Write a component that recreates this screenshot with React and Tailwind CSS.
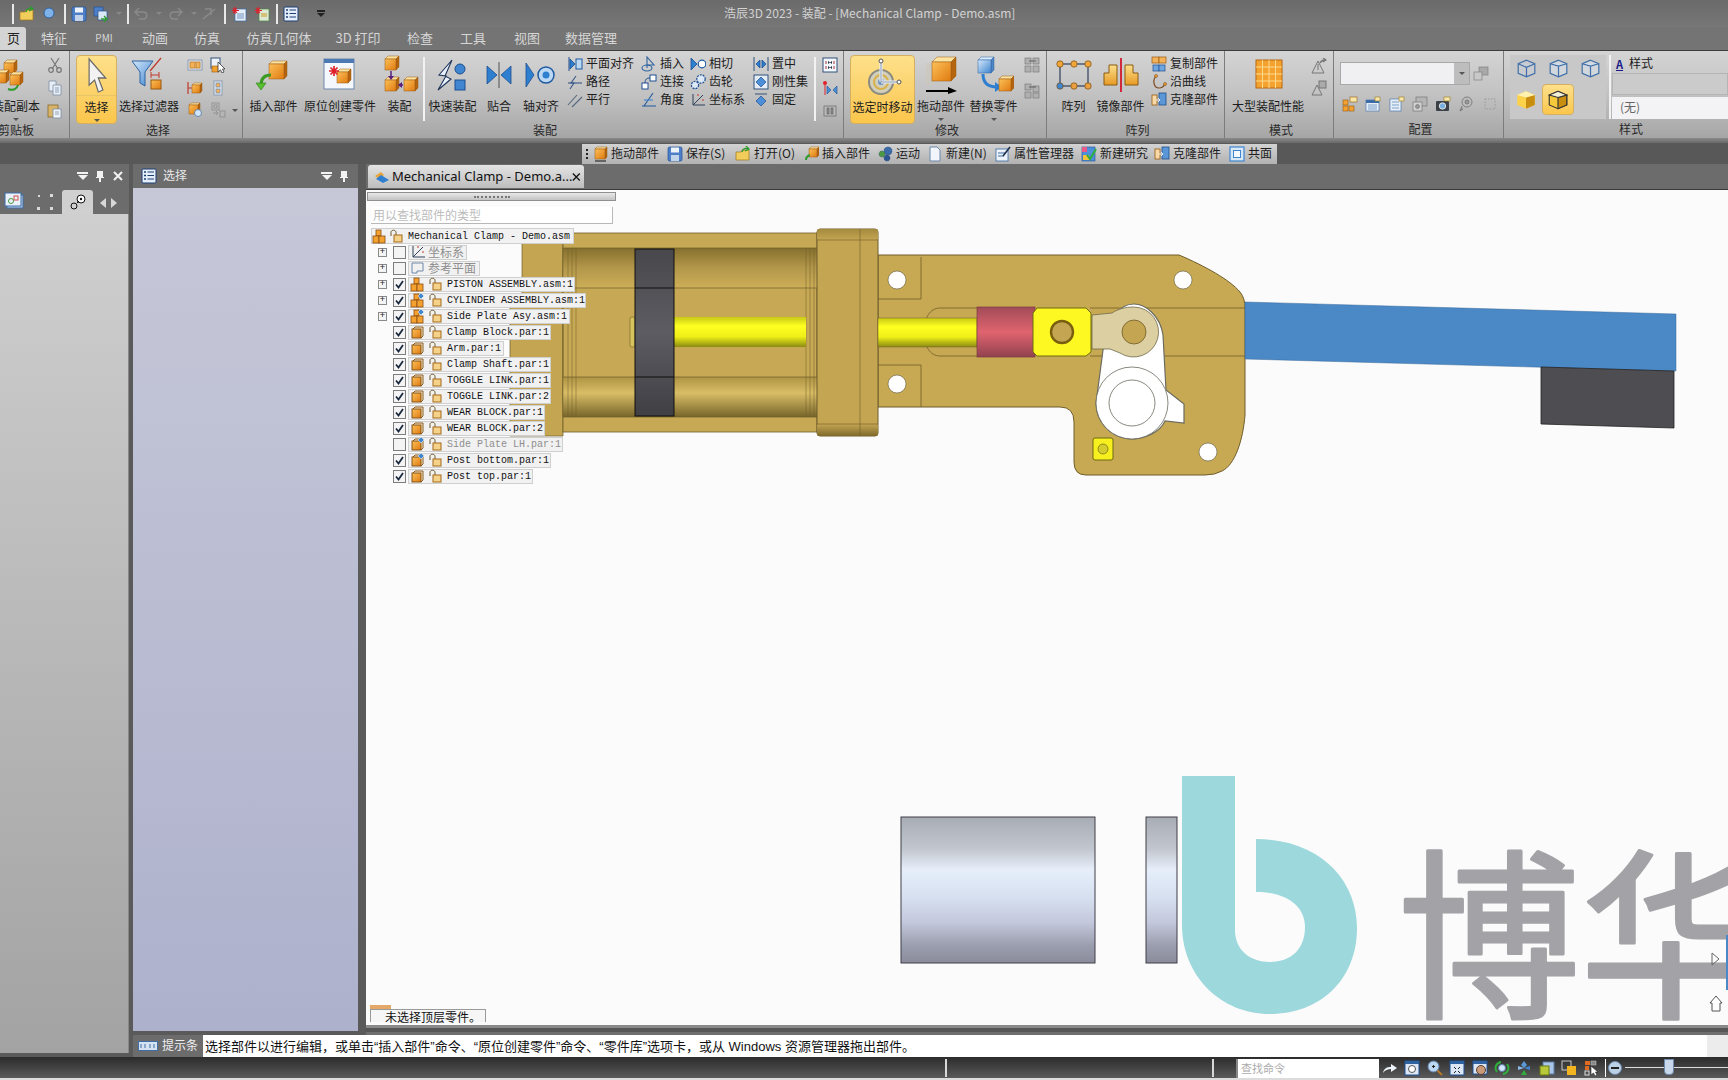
import React from 'react';

const Box = ({ x, y, s = 10, d = 3, fill = 'url(#org)', top = '#fde3a0', side = '#b5650f', line = '#9a5a10' }) => (
  <g>
    <polygon points={`${x},${y} ${x + d},${y - d} ${x + s + d},${y - d} ${x + s},${y}`} fill={top} stroke={line} strokeWidth=".5" />
    <polygon points={`${x + s},${y} ${x + s + d},${y - d} ${x + s + d},${y + s - d} ${x + s},${y + s}`} fill={side} stroke={line} strokeWidth=".5" />
    <rect x={x} y={y} width={s} height={s} fill={fill} stroke={line} strokeWidth=".5" />
  </g>
);

const BlueBox = (p) => <Box {...p} fill="url(#blu)" top="#d8ecff" side="#4f86c6" line="#2f62a0" />;

const Tri = ({ d, fill = '#2f7fd0', stroke = '#1c4f90' }) => <path d={d} fill={fill} stroke={stroke} strokeWidth=".8" />;

// big ribbon icons, drawn on a 40 box
const big = {
  copyAsm: (
    <>
      <Box x={8} y={8} s={10} />
      <Box x={0} y={18} s={10} />
      <Box x={14} y={20} s={10} />
      <path d="M12 34c5 2 9 0 10-4" fill="none" stroke="#2e9b2e" strokeWidth="2" />
    </>
  ),
  cursor: (
    <path d="M11 4 L11 30 L17 25 L21 37 L26 35 L21 23 L29 23 Z" fill="#f2f2f2" stroke="#6a6a6a" strokeWidth="1.3" transform="translate(2 -1) scale(.92 1)" />
  ),
  filter: (
    <>
      <path d="M3 6 H24 L16 17 V31 L11 28 V17 Z" fill="url(#blu)" stroke="#2f62a0" />
      <path d="M21 16 L32 3" stroke="#c0392b" strokeWidth="1.2" />
      <path d="M22 20 H30 M22 17 V23 M30 17 V23" stroke="#c0392b" fill="none" />
      <rect x="22" y="25" width="10" height="9" fill="url(#org)" stroke="#9a5a10" />
    </>
  ),
  insert: (
    <>
      <Box x={15} y={9} s={15} />
      <path d="M17 20C10 20 7 24 7 30" fill="none" stroke="#3b9b22" strokeWidth="3" />
      <polygon points="2,28 12,28 7,35" fill="#58c030" stroke="#2c7a18" strokeWidth=".6" />
    </>
  ),
  inplace: (
    <>
      <rect x="4" y="4" width="30" height="30" fill="#f4f7fc" stroke="#6d88aa" />
      <rect x="4" y="4" width="30" height="4" fill="#4c78b4" />
      <Box x={17} y={17} s={11} />
      <path d="M14 11v10M9 16h10M10.500 12.500l7 7M17.500 12.500l-7 7" stroke="#e0202a" strokeWidth="1.700" />
    </>
  ),
  assemble: (
    <>
      <Box x={5} y={4} s={11} />
      <Box x={5} y={25} s={11} />
      <Box x={24} y={25} s={11} />
      <path d="M11 16V23M19 30H23" stroke="#5a1f7a" strokeWidth="1.500" />
      <polygon points="8,21 14,21 11,25" fill="#5a1f7a" />
      <polygon points="22,27 22,33 18,30" fill="#5a1f7a" />
    </>
  ),
  quick: (
    <>
      <path d="M19 5 L6 20 L13 21 L5 35 L18 24 L12 21 Z" fill="#e9f1fb" stroke="#20355a" strokeWidth="1.100" />
      <circle cx="27" cy="14" r="5" fill="#3f85cf" stroke="#1f4f90" />
      <rect x="22" y="25" width="10" height="10" fill="#3f85cf" stroke="#1f4f90" />
    </>
  ),
  mate: (
    <>
      <Tri d="M8 11 L18 20 L8 29 Z" />
      <Tri d="M32 11 L22 20 L32 29 Z" />
      <path d="M20 7V33" stroke="#333" strokeWidth=".8" />
    </>
  ),
  axis: (
    <>
      <Tri d="M5 8 L13 20 L5 32 Z" />
      <circle cx="25" cy="20" r="8" fill="#bcd8f2" stroke="#1f5aa0" strokeWidth="1.500" />
      <circle cx="25" cy="20" r="3.500" fill="#2f7fd0" />
    </>
  ),
  gizmo: (
    <>
      <circle cx="18" cy="26" r="12" fill="#d2cfbd" stroke="#8b8b80" strokeWidth="2" />
      <circle cx="18" cy="26" r="7" fill="none" stroke="#d8b14a" strokeWidth="2" />
      <circle cx="18" cy="26" r="3" fill="#6f93bf" />
      <path d="M18 26V6M18 26H35" stroke="#e8f0fa" strokeWidth="3" />
      <path d="M18 26V6M18 26H35" stroke="#6d7a8c" strokeWidth=".7" />
      <circle cx="18" cy="5" r="2" fill="#fff" stroke="#555" />
      <circle cx="36" cy="26" r="2" fill="#fff" stroke="#555" />
    </>
  ),
  drag: (
    <>
      <rect x="5" y="8" width="8" height="22" fill="#cbc6ba" opacity=".6" />
      <Box x={11} y={7} s={19} d={5} />
      <path d="M5 36H28" stroke="#000" strokeWidth="2" />
      <polygon points="27,32 36,36 27,39" fill="#000" />
    </>
  ),
  replace: (
    <>
      <BlueBox x={4} y={5} s={13} d={3} />
      <path d="M9 19c0 10 6 13 14 13" fill="none" stroke="#2f7fd0" strokeWidth="3" />
      <polygon points="21,27 28,32 21,37" fill="#2f7fd0" />
      <Box x={25} y={24} s={12} d={3} />
    </>
  ),
  pattern: (
    <>
      <rect x="6" y="9" width="28" height="22" fill="none" stroke="#30405a" strokeWidth="1.200" />
      {[[6, 9], [20, 9], [34, 9], [6, 31], [20, 31], [34, 31]].map(([x, y], i) => (
        <circle key={i} cx={x} cy={y} r="3.200" fill={y === 9 ? '#f0a63a' : i === 3 ? '#3f85cf' : '#e8a040'} stroke="#7a4a10" strokeWidth=".7" />
      ))}
    </>
  ),
  mirror: (
    <>
      <path d="M3 30V18H8V10H16V30Z" fill="url(#ylw)" stroke="#8a5a10" />
      <path d="M37 30V18H32V10H24V30Z" fill="url(#ylw)" stroke="#8a5a10" />
      <path d="M20 3V37" stroke="#d02a3a" strokeWidth="2" />
    </>
  ),
  grid: (
    <>
      <rect x="8" y="5" width="26" height="28" fill="#f3a230" stroke="#b8670f" />
      <path d="M14.500 5V33M21 5V33M27.500 5V33M8 12H34M8 19H34M8 26H34" stroke="#ffd98a" />
    </>
  ),
};

// small icons, drawn on a 16 box
const small = {
  scissors: (
    <g fill="none" stroke="#777" strokeWidth="1.200">
      <path d="M4 1L11 12M12 1L5 12" />
      <circle cx="4" cy="13" r="2.300" />
      <circle cx="12" cy="13" r="2.300" />
    </g>
  ),
  copy: (
    <g stroke="#7c8ea6" fill="#e8eef6" strokeWidth=".8">
      <path d="M2 1h7v10H2z" />
      <path d="M6 5h8v10H6z" />
      <path d="M8 8h4M8 10h4M8 12h4" />
    </g>
  ),
  paste: (
    <g strokeWidth=".8">
      <rect x="1" y="2" width="10" height="12" fill="#d8b46a" stroke="#8a6a2a" />
      <path d="M6 6h8v9H6z" fill="#eef3f9" stroke="#7c8ea6" />
      <path d="M8 9h4M8 11h4" stroke="#7c8ea6" />
    </g>
  ),
  twoBox: (
    <g stroke="#c17a20" strokeWidth=".8">
      <rect x="1" y="3" width="14" height="10" fill="#dde6f2" stroke="#7b8ea8" />
      <rect x="3" y="5" width="5" height="6" fill="#f3b25a" />
      <rect x="9" y="5" width="4" height="6" fill="#f3b25a" />
    </g>
  ),
  boxCursor: (
    <g>
      <rect x="1" y="1" width="9" height="10" fill="#eef3f9" stroke="#30507a" />
      <rect x="2" y="9" width="7" height="6" fill="#f3a230" stroke="#9a5a10" strokeWidth=".6" />
      <path d="M8 5L8 15L10.500 12.800L12 16L14 15L12.500 12H15Z" fill="#fff" stroke="#333" strokeWidth=".8" />
    </g>
  ),
  hBox: (
    <g>
      <path d="M1 2V14M1 8H5" stroke="#c0392b" strokeWidth="1.200" />
      <Box x={5} y={5} s={8} d={2} />
    </g>
  ),
  stack: (
    <g stroke="#7b8ea8" strokeWidth=".8">
      <rect x="4" y="1" width="8" height="14" fill="#e4ecf6" />
      <rect x="6" y="3" width="4" height="4" fill="#f3b25a" />
      <rect x="6" y="9" width="4" height="4" fill="#f3b25a" />
    </g>
  ),
  search: (
    <g>
      <Box x={2} y={3} s={9} d={2} />
      <circle cx="11" cy="11" r="3.500" fill="#cfe6fb" stroke="#6d88aa" />
    </g>
  ),
  ghost: (
    <g fill="none" stroke="#8c8c8c" strokeWidth=".8">
      <rect x="2" y="1" width="7" height="7" />
      <rect x="4" y="3" width="3" height="3" />
      <rect x="10" y="9" width="5" height="6" />
      <path d="M3 11h5M6 9l2 2-2 2" />
    </g>
  ),
  plane: (
    <g>
      <path d="M2 1V15" stroke="#1c4f90" />
      <Tri d="M3 3L8 8L3 13Z" />
      <rect x="9" y="3" width="6" height="10" fill="#bcd8f2" stroke="#1f5aa0" />
    </g>
  ),
  path: (
    <g fill="none" stroke="#3a5a88" strokeWidth="1.100">
      <path d="M1 9H15" />
      <path d="M9 2L4 9L7 9L3 15" />
    </g>
  ),
  parallel: <path d="M1 13L10 3M5 15L15 5" stroke="#55677f" strokeWidth="1.100" fill="none" />,
  insertPin: (
    <g fill="none" stroke="#2f62a0" strokeWidth="1.100">
      <ellipse cx="6" cy="12" rx="5" ry="3" />
      <path d="M6 12V1L13 9H6" />
    </g>
  ),
  connect: (
    <g>
      <rect x="1" y="9" width="6" height="6" fill="#fff" stroke="#1f4f90" />
      <rect x="9" y="1" width="6" height="6" fill="#fff" stroke="#1f4f90" />
      <path d="M4 9C4 5 6 4 9 4" fill="none" stroke="#1f4f90" />
    </g>
  ),
  angle: (
    <g fill="none" stroke="#1f5aa0" strokeWidth="1.100">
      <path d="M1 14H15M3 14L12 1" />
      <path d="M3 8H12" stroke="#3f85cf" />
    </g>
  ),
  tangent: (
    <g>
      <Tri d="M1 2L7 8L1 14Z" />
      <circle cx="12" cy="8" r="3.800" fill="#fff" stroke="#1f5aa0" strokeWidth="1.200" />
    </g>
  ),
  gear: (
    <g fill="#dce8f6" stroke="#1f4f90" strokeWidth="1.200" strokeDasharray="2 1">
      <circle cx="5" cy="11" r="3.600" />
      <circle cx="11" cy="5" r="4.200" />
    </g>
  ),
  coord: (
    <g fill="none" stroke="#30405a" strokeWidth="1">
      <path d="M3 13L13 3M3 13H15M3 13V2" />
      <path d="M7 3h2M13 7v2" stroke="#c0392b" />
    </g>
  ),
  center: (
    <g>
      <path d="M1 1V15M15 1V15" stroke="#30507a" />
      <Tri d="M7 4L3 8L7 12Z" />
      <Tri d="M9 4L13 8L9 12Z" />
    </g>
  ),
  rigid: (
    <g>
      <rect x="1" y="1" width="14" height="14" fill="#e4ecf6" stroke="#30507a" />
      <path d="M8 3L13 8L8 13L3 8Z" fill="#4c8ed8" stroke="#1f4f90" strokeWidth=".7" />
    </g>
  ),
  fixed: (
    <g>
      <path d="M2 2H14" stroke="#30507a" />
      <path d="M8 4L13 9L8 14L3 9Z" fill="#4c8ed8" stroke="#1f4f90" strokeWidth=".7" />
    </g>
  ),
  frameTri: (
    <g>
      <rect x="1" y="1" width="14" height="14" fill="#f4f7fc" stroke="#30507a" />
      <path d="M4 4V7M12 4V7M4 9V12M12 9V12" stroke="#a33" />
      <path d="M6 4L8 5.500L6 7ZM10 4L8 5.500L10 7ZM6 9L8 10.500L6 12ZM10 9L8 10.500L10 12Z" fill="#234" />
    </g>
  ),
  bowTie: (
    <g>
      <circle cx="3" cy="3" r="2" fill="#e0202a" />
      <path d="M3 5V15" stroke="#e0202a" />
      <path d="M5 6L9 10L5 14ZM15 6L11 10L15 14Z" fill="#4c8ed8" stroke="#1f4f90" strokeWidth=".6" />
    </g>
  ),
  dimBox: (
    <g fill="#8d8d8d" stroke="#666" strokeWidth=".7">
      <rect x="2" y="3" width="12" height="10" fill="#bbb" />
      <rect x="5" y="5" width="2" height="6" />
      <rect x="9" y="5" width="2" height="6" />
    </g>
  ),
  dimA: (
    <g fill="#b0b0b0" stroke="#7c7c7c" strokeWidth=".7">
      <rect x="1" y="1" width="6" height="6" />
      <rect x="9" y="1" width="6" height="6" />
      <rect x="1" y="9" width="6" height="6" />
      <rect x="9" y="9" width="6" height="6" />
      <path d="M5 4H12" stroke="#444" />
    </g>
  ),
  dimB: (
    <g fill="#b0b0b0" stroke="#7c7c7c" strokeWidth=".7">
      <rect x="1" y="1" width="6" height="6" />
      <rect x="9" y="3" width="6" height="6" />
      <rect x="1" y="9" width="6" height="6" />
      <rect x="9" y="10" width="6" height="5" />
      <path d="M12 4H5" stroke="#444" />
    </g>
  ),
  copyParts: (
    <g strokeWidth=".7">
      <rect x="1" y="1" width="7" height="6" fill="#f3b25a" stroke="#9a5a10" />
      <rect x="8" y="1" width="7" height="6" fill="#f3b25a" stroke="#9a5a10" />
      <rect x="2" y="9" width="6" height="6" fill="#6fa6df" stroke="#1f4f90" />
      <rect x="8" y="9" width="6" height="6" fill="#6fa6df" stroke="#1f4f90" />
    </g>
  ),
  curve: (
    <g fill="none">
      <path d="M5 2C1 7 3 14 8 14C11 14 13 12 14 10" stroke="#7a4a20" strokeWidth="1.200" />
      <circle cx="5" cy="2" r="1.500" fill="#f3a230" stroke="#7a4a20" strokeWidth=".6" />
      <circle cx="14" cy="10" r="1.500" fill="#f3a230" stroke="#7a4a20" strokeWidth=".6" />
    </g>
  ),
  clone: (
    <g strokeWidth=".8">
      <rect x="1" y="3" width="5" height="10" fill="#f7d9a8" stroke="#9a5a10" />
      <rect x="8" y="1" width="7" height="12" fill="#5b97d6" stroke="#1f4f90" />
      <path d="M5 8h4M7 6l2 2-2 2" stroke="#fff" fill="none" />
    </g>
  ),
  tent1: (
    <g fill="none" stroke="#777" strokeWidth="1">
      <path d="M1 15L7 3L13 15ZM7 6V12" />
      <path d="M9 5C10 3 12 2 14 2M12 0L15 2L12 4" strokeWidth="1.300" />
    </g>
  ),
  tent2: (
    <g fill="none" stroke="#777" strokeWidth="1">
      <path d="M1 15L6 5L11 15Z" />
      <rect x="8" y="1" width="7" height="7" fill="#aaa" />
    </g>
  ),
  cfgSave: (
    <g fill="#a9a9a9" stroke="#808080" strokeWidth=".7">
      <rect x="6" y="1" width="9" height="8" />
      <rect x="1" y="6" width="8" height="8" fill="#c8c8c8" />
    </g>
  ),
  cfg1: (
    <g strokeWidth=".6" stroke="#9a5a10" fill="#f3a230">
      <rect x="1" y="4" width="5" height="5" />
      <rect x="1" y="10" width="5" height="5" />
      <rect x="7" y="10" width="5" height="5" />
      <rect x="8" y="1" width="7" height="5" fill="#f7e7a8" />
    </g>
  ),
  cfg2: (
    <g strokeWidth=".6">
      <rect x="1" y="4" width="13" height="11" fill="#e6eef8" stroke="#3b6ca8" />
      <rect x="1" y="4" width="13" height="3" fill="#3b6ca8" />
      <path d="M3 9h9M3 11h9M3 13h9" stroke="#3b6ca8" />
      <rect x="10" y="1" width="5" height="4" fill="#f7e7a8" stroke="#9a7a20" />
    </g>
  ),
  cfg3: (
    <g strokeWidth=".6">
      <rect x="1" y="3" width="11" height="12" fill="#e6eef8" stroke="#3b6ca8" />
      <path d="M3 6h7M3 9h7M3 12h7" stroke="#3b6ca8" />
      <rect x="10" y="1" width="5" height="4" fill="#f7e7a8" stroke="#9a7a20" />
    </g>
  ),
  cfg4: (
    <g fill="#b5b5b5" stroke="#777" strokeWidth=".7">
      <rect x="4" y="1" width="11" height="9" />
      <rect x="1" y="6" width="9" height="9" fill="#d0d0d0" />
      <circle cx="5.500" cy="10.500" r="2" fill="#999" />
    </g>
  ),
  camera: (
    <g>
      <rect x="1" y="5" width="13" height="10" rx="1" fill="#3a3f48" />
      <circle cx="7.500" cy="10" r="3.200" fill="#7ab0e0" stroke="#ddd" />
      <rect x="9" y="1" width="6" height="4" fill="#f7e7a8" stroke="#9a7a20" strokeWidth=".6" />
    </g>
  ),
  camGhost: (
    <g fill="#9a9a9a" stroke="#707070" strokeWidth=".8">
      <circle cx="9" cy="6" r="5" fill="#bdbdbd" />
      <circle cx="9" cy="6" r="2" />
      <path d="M4 10L2 15L5 13" />
    </g>
  ),
  dotted: <rect x="3" y="3" width="10" height="10" fill="none" stroke="#9a9a9a" strokeDasharray="1.500 1.500" />,
  wire: (
    <g fill="#c6d4e6" fillOpacity=".25" stroke="#3f6ea8">
      <path d="M8 1L15 4V12L8 15L1 12V4Z" />
      <path d="M1 4L8 7L15 4M8 7V15" />
    </g>
  ),
  wire2: (
    <g fill="#dbe6f2" fillOpacity=".5" stroke="#3f6ea8">
      <path d="M8 1L15 4V12L8 15L1 12V4Z" />
      <path d="M1 4L8 6L15 4M8 6V15" />
    </g>
  ),
  solid: (
    <g>
      <path d="M8 1L15 4V12L8 15L1 12V4Z" fill="#fbd24a" />
      <path d="M8 6L15 4V12L8 15Z" fill="#c98d10" />
      <path d="M1 4L8 1L15 4L8 6Z" fill="#fff2b0" />
    </g>
  ),
  solidEdge: (
    <g stroke="#333" strokeWidth=".9">
      <path d="M8 1L15 4V12L8 15L1 12V4Z" fill="#f6c93a" />
      <path d="M8 6L15 4V12L8 15Z" fill="#c98d10" />
      <path d="M1 4L8 1L15 4L8 6Z" fill="#f4f0d8" />
    </g>
  ),
  folder: (
    <g>
      <path d="M1 6H6L7 4H14V14H1Z" fill="#f3cd5b" stroke="#a17a1a" strokeWidth=".7" />
      <path d="M7 6C8 2 11 2 13 3M11 0L14 3L10 5" fill="none" stroke="#2e9b2e" strokeWidth="1.300" />
    </g>
  ),
  globe: (
    <g>
      <circle cx="7" cy="7" r="5" fill="#7fb2e8" stroke="#2f62a0" />
      <path d="M11 11L14 14" stroke="#777" strokeWidth="1.500" />
    </g>
  ),
  save: (
    <g>
      <rect x="1" y="1" width="14" height="14" rx="1.500" fill="#4d7fc8" stroke="#24508f" strokeWidth=".7" />
      <rect x="4" y="1.500" width="8" height="5" fill="#eef3fa" />
      <rect x="4" y="9" width="8" height="6" fill="#c3d4ea" />
    </g>
  ),
  saveAll: (
    <g>
      <rect x="1" y="1" width="9" height="9" fill="#4d7fc8" stroke="#24508f" strokeWidth=".7" />
      <rect x="5" y="5" width="9" height="9" fill="#dce7f5" stroke="#24508f" strokeWidth=".7" />
      <path d="M8 13h6M11 10l3 3-3 3" stroke="#2e9b2e" strokeWidth="1.300" fill="none" />
    </g>
  ),
  undo: <path d="M3 6H10C15 6 15 13 10 13H6M6 2L2 6L6 10" fill="none" stroke="#8b8b8b" strokeWidth="1.400" />,
  redo: <path d="M13 6H6C1 6 1 13 6 13H10M10 2L14 6L10 10" fill="none" stroke="#8b8b8b" strokeWidth="1.400" />,
  link: <path d="M2 13L14 3M4 3H10V9" fill="none" stroke="#8b8b8b" strokeWidth="1.400" />,
  starPage: (
    <g>
      <rect x="4" y="3" width="11" height="12" fill="#e6eef8" stroke="#3b6ca8" strokeWidth=".7" />
      <path d="M6 8h7M6 10h7M6 12h7" stroke="#3b6ca8" strokeWidth=".7" />
      <path d="M4 1v7M1 4.500h7M2 2l4 5M6 2l-4 5" stroke="#e0202a" strokeWidth="1.100" />
    </g>
  ),
  starPage2: (
    <g>
      <rect x="5" y="3" width="10" height="12" fill="#dbe9d5" stroke="#4b8a42" strokeWidth=".7" />
      <path d="M7 8h6M7 10h6" stroke="#d09a20" strokeWidth="1.200" />
      <path d="M4 1v7M1 4.500h7M2 2l4 5M6 2l-4 5" stroke="#e0202a" strokeWidth="1.100" />
    </g>
  ),
  listDoc: (
    <g>
      <rect x="1" y="1" width="14" height="14" rx="1" fill="#e4eefa" stroke="#1f3f72" />
      <path d="M3 4h2M3 7.500h2M3 11h2" stroke="#1f3f72" strokeWidth="1.500" />
      <path d="M6.500 4H13M6.500 7.500H13M6.500 11H13" stroke="#1f3f72" />
    </g>
  ),
  dragCube: (
    <g>
      <Box x={3} y={3} s={10} d={2} />
      <path d="M3 15H14" stroke="#111" />
    </g>
  ),
  greenCube: (
    <g>
      <Box x={6} y={3} s={8} d={2} />
      <path d="M7 9C4 10 3 12 3 14" stroke="#2e9b2e" strokeWidth="2" fill="none" />
    </g>
  ),
  gears: (
    <g fill="#3b6ca8" stroke="#1f3f72" strokeWidth=".5" strokeDasharray="1.500 .7">
      <circle cx="11" cy="5" r="4" />
      <circle cx="5" cy="8" r="3" fill="#4b9a42" />
      <circle cx="10" cy="12" r="3" fill="#2b5590" />
    </g>
  ),
  newDoc: <path d="M3 1H10L13 4V15H3Z" fill="#f2f6fb" stroke="#6d88aa" />,
  props: (
    <g>
      <rect x="1" y="3" width="12" height="12" fill="#eef3f9" stroke="#3b6ca8" strokeWidth=".8" />
      <path d="M3 7h8M3 10h6" stroke="#3b6ca8" />
      <path d="M8 10L15 1" stroke="#1d2f4a" strokeWidth="1.600" />
    </g>
  ),
  study: (
    <g>
      <rect x="1" y="1" width="13" height="14" fill="#4d8fd8" stroke="#24508f" strokeWidth=".6" />
      <rect x="1" y="1" width="5" height="5" fill="#e85a8a" />
      <rect x="2" y="9" width="6" height="5" fill="#f3c13a" />
      <path d="M6 9L9 13L15 3" stroke="#2eae3a" strokeWidth="2" fill="none" />
    </g>
  ),
  coplanar: (
    <g>
      <rect x="1" y="1" width="14" height="14" fill="#d9e8f7" stroke="#3f85cf" strokeWidth="1.200" />
      <rect x="4.500" y="4.500" width="7" height="7" fill="#f4f8fc" stroke="#3f85cf" />
    </g>
  ),
  fitView: (
    <g>
      <rect x="1" y="1" width="14" height="14" fill="#dce7f5" stroke="#1f4f90" />
      <rect x="1" y="1" width="14" height="3" fill="#2f62a0" />
      <circle cx="8" cy="9" r="3.500" fill="#fff" stroke="#555" />
    </g>
  ),
  zoomIn: (
    <g>
      <circle cx="6.500" cy="6.500" r="5.500" fill="#bcd8f2" stroke="#5d7fa8" />
      <path d="M5 6.500h3M6.500 5v3" stroke="#222" />
      <path d="M10.500 10.500L15 15" stroke="#b5772a" strokeWidth="2" />
    </g>
  ),
  zoomArea: (
    <g>
      <rect x="1" y="1" width="14" height="14" fill="#dce7f5" stroke="#1f4f90" />
      <rect x="1" y="1" width="14" height="3" fill="#2f62a0" />
      <path d="M5 7l2 2M11 7L9 9M5 13l2-2M11 13L9 11" stroke="#222" />
    </g>
  ),
  pan: (
    <g>
      <rect x="1" y="1" width="14" height="13" fill="#dce7f5" stroke="#1f4f90" />
      <rect x="1" y="1" width="14" height="3" fill="#2f62a0" />
      <circle cx="9" cy="10" r="4.500" fill="#c99a7a" stroke="#5a4030" />
    </g>
  ),
  orbit: (
    <g>
      <circle cx="8" cy="8" r="3.500" fill="#cfe6fb" stroke="#5d7fa8" />
      <path d="M3 12C0 8 2 3 7 2M13 4C16 8 14 13 9 14" fill="none" stroke="#2eae3a" strokeWidth="2" />
    </g>
  ),
  nav: (
    <g>
      <path d="M8 1L11 5L8 8L5 5Z" fill="#5b97d6" />
      <path d="M8 8L14 6V10Z" fill="#3f85cf" />
      <path d="M8 8L2 6V10Z" fill="#8ab8e8" />
      <path d="M8 10L11 15H5Z" fill="#2eae3a" />
    </g>
  ),
  screen: (
    <g>
      <rect x="4" y="2" width="11" height="12" fill="#a9c6e8" stroke="#5d7fa8" />
      <rect x="1" y="6" width="9" height="9" fill="#b8c93a" stroke="#6a7a10" />
    </g>
  ),
  layers: (
    <g>
      <rect x="1" y="1" width="9" height="9" fill="none" stroke="#c8c8c8" />
      <rect x="6" y="6" width="9" height="9" fill="#f2b41e" />
    </g>
  ),
  selCursor: (
    <g>
      <rect x="1" y="1" width="5" height="4" fill="#e06a20" />
      <rect x="7" y="1" width="5" height="4" fill="#888" stroke="#ccc" strokeWidth=".5" />
      <rect x="1" y="6" width="4" height="4" fill="#e06a20" />
      <rect x="1" y="11" width="4" height="4" fill="none" stroke="#ddd" />
      <path d="M7 6L7 15L9.500 13L11 16L13 15L11.500 12H14Z" fill="#fff" stroke="#222" strokeWidth=".6" />
    </g>
  ),
  arrowRight: <path d="M1 13C2 8 5 7 9 7V4L15 8L9 12V9C6 9 3 10 1 13Z" fill="#eef3f9" />,
};

const S = ({ n, s = 16, className }) => (
  <svg width={s} height={s} viewBox="0 0 16 16" className={`shrink-0 ${className || ''}`}>
    {small[n]}
  </svg>
);

const Caret = ({ className = '', style }) => (
  <div style={style} className={`w-0 h-0 border-x-[3px] border-x-transparent border-t-[3px] border-t-[#555] ${className}`} />
);

const BigBtn = ({ icon, label, w, active, caret }) => (
  <div className={`flex flex-col items-center h-[69px] shrink-0 ${active ? 'rounded-sm border border-[#d5b060] bg-gradient-to-b from-[#fde08a] to-[#fbc64a]' : ''}`} style={{ width: w }}>
    <div className={`h-[40px] w-full flex items-center justify-center shrink-0 ${active && caret ? 'border-b border-b-[#e8c468]' : ''}`}>
      <svg width="40" height="40" viewBox="0 0 40 40" className="shrink-0">{big[icon]}</svg>
    </div>
    <div className="text-[12px] leading-[18px] whitespace-nowrap text-[#1c1c1c] mt-[2px]">{label}</div>
    {caret && <Caret className="mt-[3px]" />}
  </div>
);

const SmallRow = ({ n, label }) => (
  <div className="h-[18px] flex items-center gap-[3px] whitespace-nowrap text-[12px] text-[#1c1c1c]">
    <S n={n} />
    <span className="pb-[2px]">{label}</span>
  </div>
);

const SmallCol = ({ w, rows, className = '' }) => (
  <div className={`flex flex-col shrink-0 ${className}`} style={{ width: w }}>
    {rows.map(([n, label]) => (
      <SmallRow key={label} n={n} label={label} />
    ))}
  </div>
);

const Group = ({ w, label, labelOffset = 0, labelClass = 'text-center', children, className = '' }) => (
  <div className="flex flex-col h-full shrink-0 border-r border-r-[#7c7c7c] overflow-hidden" style={{ width: w }}>
    <div className={`flex pt-[4px] h-[72px] ${className}`}>{children}</div>
    <div className={`h-[16px] text-[12px] leading-[14px] text-[#2a2a2a] whitespace-nowrap ${labelClass}`} style={{ paddingLeft: labelOffset }}>
      {label}
    </div>
  </div>
);

const Vsep = ({ className = '' }) => <div className={`w-[2px] h-[64px] bg-[#f2f2f2] shrink-0 ${className}`} />;

const IconCol = ({ names, w = 24, gap = 6, className = '' }) => (
  <div className={`flex flex-col items-center shrink-0 pt-[2px] ${className}`} style={{ width: w, gap }}>
    {names.map((n) => (
      <S key={n} n={n} />
    ))}
  </div>
);

const Ribbon = () => (
  <div className="h-[88px] flex bg-gradient-to-b from-[#d4d4d4] via-[#c2c2c2] to-[#a6a6a6] border-t border-[#3c3c3c]">
    <Group w={70} label="剪贴板" labelClass="-ml-[2px]">
      <div className="w-[48px] -ml-[8px] shrink-0">
        <BigBtn icon="copyAsm" label="装配副本" w={48} caret />
      </div>
      <IconCol names={['scissors', 'copy', 'paste']} w={24} gap={7} className="pl-[4px] ml-[1px]" />
    </Group>
    <Group w={173} label="选择" labelOffset={4} className="pl-[6px]">
      <BigBtn icon="cursor" label="选择" w={41} active caret />
      <BigBtn icon="filter" label="选择过滤器" w={64} />
      <div className="grid grid-cols-[23px_23px] gap-y-[6px] pt-[2px] ml-[2px] justify-items-center h-[64px]">
        {['twoBox', 'boxCursor', 'hBox', 'stack', 'search', 'ghost'].map((n) => (
          <S key={n} n={n} />
        ))}
      </div>
      <Caret className="mt-[54px] ml-[3px]" />
    </Group>
    <Group w={601} label="装配" labelOffset={4}>
      <BigBtn icon="insert" label="插入部件" w={61} />
      <BigBtn icon="inplace" label="原位创建零件" w={72} caret />
      <BigBtn icon="assemble" label="装配" w={47} />
      <Vsep className="mt-[2px]" />
      <BigBtn icon="quick" label="快速装配" w={55} />
      <BigBtn icon="mate" label="贴合" w={38} />
      <BigBtn icon="axis" label="轴对齐" w={46} />
      <SmallCol w={74} className="ml-[3px]" rows={[['plane', '平面对齐'], ['path', '路径'], ['parallel', '平行']]} />
      <SmallCol w={49} rows={[['insertPin', '插入'], ['connect', '连接'], ['angle', '角度']]} />
      <SmallCol w={63} rows={[['tangent', '相切'], ['gear', '齿轮'], ['coord', '坐标系']]} />
      <SmallCol w={61} rows={[['center', '置中'], ['rigid', '刚性集'], ['fixed', '固定']]} />
      <Vsep className="mt-[2px]" />
      <IconCol names={['frameTri', 'bowTie', 'dimBox']} w={28} gap={7} />
    </Group>
    <Group w={203} label="修改" labelOffset={4} className="pl-[6px]">
      <BigBtn icon="gizmo" label="选定时移动" w={65} active />
      <BigBtn icon="drag" label="拖动部件" w={52} caret />
      <BigBtn icon="replace" label="替换零件" w={53} caret />
      <IconCol names={['dimA', 'dimB']} w={24} gap={10} />
    </Group>
    <Group w={178} label="阵列" labelOffset={4} className="pl-[5px]">
      <BigBtn icon="pattern" label="阵列" w={43} />
      <BigBtn icon="mirror" label="镜像部件" w={51} />
      <SmallCol w={70} className="ml-[5px]" rows={[['copyParts', '复制部件'], ['curve', '沿曲线'], ['clone', '克隆部件']]} />
    </Group>
    <Group w={109} label="模式" labelOffset={4} className="pl-[7px]">
      <BigBtn icon="grid" label="大型装配性能" w={72} />
      <IconCol names={['tent1', 'tent2']} w={26} gap={6} className="ml-[2px] pt-[3px]" />
    </Group>
    <Group w={170} label="配置" labelOffset={4} className="pl-[6px]">
      <div className="flex flex-col">
        <div className="flex items-center mt-[7px] gap-[2px]">
          <div className="w-[130px] h-[23px] flex bg-[#bdbdbd] border border-[#a8a8a8]">
            <div className="w-[113px] bg-[#f0eff2]" />
            <div className="flex-1 flex items-center justify-center"><Caret /></div>
          </div>
          <S n="cfgSave" className="ml-[1px]" />
        </div>
        <div className="flex mt-[11px] gap-[7.300px] pl-[2px]">
          {['cfg1', 'cfg2', 'cfg3', 'cfg4', 'camera', 'camGhost', 'dotted'].map((n) => (
            <S key={n} n={n} />
          ))}
        </div>
      </div>
    </Group>
    <div className="flex flex-col h-full flex-1 overflow-hidden">
      <div className="flex pt-[4px] h-[72px] pl-[6px]">
        <div className="w-[96px] h-[64px] bg-[#c8c8c8] grid grid-cols-3 justify-items-center items-center py-[1px] shrink-0">
          <S n="wire" s={19} />
          <S n="wire2" s={19} />
          <S n="wire2" s={19} />
          <S n="solid" s={20} />
          <div className="w-[32px] h-[31px] rounded-sm border border-[#d5b060] bg-gradient-to-b from-[#fde08a] to-[#fbc64a] flex items-center justify-center">
            <S n="solidEdge" s={20} />
          </div>
        </div>
        <Vsep className="ml-[3px]" />
        <div className="flex-1 pl-[1px]">
          <div className="h-[18px] flex items-center text-[12px] text-[#1c1c1c] pl-[4px] gap-[6px]">
            <span className="font-bold text-[#1a1a8a] underline text-[11px] leading-none">A</span>
            <span className="pb-[2px]">样式</span>
          </div>
          <div className="h-[22px] bg-[#cbcbcb] border border-[#b5b5b5]" />
          <div className="h-[22px] mt-[2px] bg-[#f3f3f5] pl-[8px] text-[12px] leading-[20px] text-[#666]">(无)</div>
        </div>
      </div>
      <div className="h-[16px] text-[12px] leading-[14px] text-[#2a2a2a] pl-[115px]">样式</div>
    </div>
  </div>
);

const QUICK = [
  { sep: 13 }, { n: 'folder', x: 27 }, { n: 'globe', x: 50 }, { sep: 65 }, { n: 'save', x: 79 }, { n: 'saveAll', x: 101 },
  { caret: 119 }, { sep: 128 }, { n: 'undo', x: 141 }, { caret: 159 }, { n: 'redo', x: 176 }, { caret: 194 }, { n: 'link', x: 209 },
  { sep: 225 }, { n: 'starPage', x: 239 }, { n: 'starPage2', x: 262 }, { sep: 277 }, { n: 'listDoc', x: 291 },
];

const TitleBar = () => {
  let cursor = 0;
  return (
    <div className="h-[27px] flex items-center bg-gradient-to-b from-[#6a6a6a] to-[#777777] shrink-0">
      {QUICK.map((q, i) => {
        const center = q.sep ?? q.caret ?? q.x;
        const size = q.sep ? 2 : q.caret ? 6 : 16;
        const ml = center - size / 2 - cursor;
        cursor = center + size / 2;
        if (q.sep) return <div key={i} className="w-[2px] h-[20px] bg-[#e8e8e8] shrink-0" style={{ marginLeft: ml }} />;
        if (q.caret) return <Caret key={i} className="shrink-0 !border-t-[#888]" style={{ marginLeft: ml }} />;
        return <div key={i} style={{ marginLeft: ml }} className="shrink-0"><S n={q.n} /></div>;
      })}
      <div className="ml-[18px] flex flex-col items-center gap-[1px] shrink-0">
        <div className="w-[8px] h-[2px] bg-[#222]" />
        <div className="w-0 h-0 border-x-[4px] border-x-transparent border-t-[4px] border-t-[#222]" />
      </div>
      <div className="flex-1 pl-[399px] text-[12px] text-[#d2d2d2] whitespace-nowrap pb-[2px]">
        浩辰3D 2023 - 装配 - [Mechanical Clamp - Demo.asm]
      </div>
    </div>
  );
};

const TABS = [
  ['特征', 54, 30], ['PMI', 104, 30], ['动画', 155, 30], ['仿真', 207, 30], ['仿真几何体', 279, 70], ['3D 打印', 358, 50], ['检查', 420, 30], ['工具', 473, 30], ['视图', 527, 30], ['数据管理', 591, 56],
];

const TabBar = () => {
  let cursor = 26;
  return (
    <div className="h-[23px] flex bg-[#747474] text-[13px] text-[#d6d6d6] shrink-0">
      <div className="w-[26px] bg-[#d4d4d4] rounded-tr-[3px] text-[#222] text-right pr-[6px] leading-[22px]">页</div>
      {TABS.map(([t, cx, w]) => {
        const ml = cx - w / 2 - cursor;
        cursor = cx + w / 2;
        return (
          <div key={t} className={`text-center whitespace-nowrap leading-[21px] ${t === 'PMI' ? 'text-[10px]' : ''}`} style={{ width: w, marginLeft: ml }}>
            {t}
          </div>
        );
      })}
    </div>
  );
};

const TOOLS = [
  ['dragCube', '拖动部件', 75],
  ['save', '保存(S)', 68],
  ['folder', '打开(O)', 68],
  ['greenCube', '插入部件', 74],
  ['gears', '运动', 50],
  ['newDoc', '新建(N)', 68],
  ['props', '属性管理器', 86],
  ['study', '新建研究', 73],
  ['clone', '克隆部件', 75],
  ['coplanar', '共面', 40],
];

const FloatBar = () => (
  <div className="h-[21px] bg-[#585858] shrink-0 pl-[582px] pt-[1px]">
    <div className="h-[20px] w-[695px] flex items-center bg-gradient-to-b from-[#d2d2d2] to-[#b2b2b2] text-[12px] text-[#1c1c1c]">
      <div className="w-[10px] pl-[4px] flex flex-col gap-[2px] shrink-0">
        <div className="w-[2px] h-[2px] bg-[#222]" />
        <div className="w-[2px] h-[2px] bg-[#222]" />
        <div className="w-[2px] h-[2px] bg-[#222]" />
      </div>
      {TOOLS.map(([n, label, w]) => (
        <div key={label} className="flex items-center gap-[3px] whitespace-nowrap shrink-0" style={{ width: w }}>
          <S n={n} />
          <span className="pb-[2px]">{label}</span>
        </div>
      ))}
    </div>
  </div>
);

const PanelBtns = ({ close }) => (
  <div className="flex items-center gap-[7px] text-white">
    <div className="flex flex-col items-center gap-[1px]">
      <div className="w-[11px] h-[2px] bg-[#f2f2f2]" />
      <div className="w-0 h-0 border-x-[5px] border-x-transparent border-t-[5px] border-t-[#f2f2f2]" />
    </div>
    <svg width="10" height="12" viewBox="0 0 10 12">
      <path d="M2 1H8V7H9V8H6V12H4V8H1V7H2Z" fill="#f2f2f2" />
    </svg>
    {close && (
      <svg width="10" height="10" viewBox="0 0 10 10" className="ml-[1px]">
        <path d="M1 1L9 9M9 1L1 9" stroke="#f2f2f2" strokeWidth="2" />
      </svg>
    )}
  </div>
);

const LeftPanel = () => (
  <div className="w-[129px] h-[889px] shrink-0 flex flex-col bg-[#6c6c6c]">
    <div className="h-[24px] flex items-center justify-end pr-[6px]">
      <PanelBtns close />
    </div>
    <div className="h-[26px] flex items-end pl-[4px]">
      <svg width="20" height="18" viewBox="0 0 20 18" className="mb-[4px]">
        <rect x="3" y="3" width="16" height="13" fill="#b5cbe6" stroke="#3f6ea8" />
        <rect x="1" y="1" width="16" height="13" fill="#eaf1fa" stroke="#3f6ea8" />
        <circle cx="7" cy="9" r="2.500" fill="none" stroke="#4b9a42" />
        <rect x="10" y="4" width="4" height="4" fill="none" stroke="#d0504a" />
      </svg>
      <svg width="22" height="20" viewBox="0 0 22 20" className="ml-[11px] mb-[2px]">
        <path d="M3 3h2v2H3zM15 2h3v3h-3zM2 15h3v3H2zM15 15h3v3h-3z" fill="#dadada" />
      </svg>
      <div className="w-[31px] h-[24px] ml-[5px] bg-[#d0d0d0] rounded-t-[3px] flex items-center justify-center">
        <svg width="16" height="16" viewBox="0 0 16 16">
          <circle cx="11" cy="5" r="4" fill="#fff" stroke="#111" />
          <circle cx="11" cy="5" r="1.200" fill="#111" />
          <circle cx="4" cy="12" r="3" fill="none" stroke="#111" />
          <path d="M7 9L9 7" stroke="#111" />
        </svg>
      </div>
      <div className="flex gap-[5px] ml-[7px] mb-[6px]">
        <div className="w-0 h-0 border-y-[5px] border-y-transparent border-r-[6px] border-r-[#d8d8d8]" />
        <div className="w-0 h-0 border-y-[5px] border-y-transparent border-l-[6px] border-l-[#d8d8d8]" />
      </div>
    </div>
    <div className="flex-1 bg-gradient-to-b from-[#cfcfcf] to-[#a3a3a3] border-r border-r-[#888]" />
  </div>
);

const MidPanel = () => (
  <div className="w-[225px] h-[867px] shrink-0 flex flex-col bg-[#6c6c6c]">
    <div className="h-[24px] flex items-center pl-[8px] pr-[9px]">
      <S n="listDoc" />
      <span className="ml-[6px] text-[12px] text-[#e8e8e8] flex-1 pb-[2px]">选择</span>
      <PanelBtns />
    </div>
    <div className="flex-1 bg-gradient-to-b from-[#c6c8d8] to-[#aeb1cc]" />
  </div>
);

const TREE = [
  ['坐标系', 'coord', true, false, true, 59],
  ['参考平面', 'planeRef', true, false, true, 72],
  ['PISTON ASSEMBLY.asm:1', 'asm', true, true, false, 167],
  ['CYLINDER ASSEMBLY.asm:1', 'asmStar', true, true, false, 178],
  ['Side Plate Asy.asm:1', 'asmStar', true, true, false, 162],
  ['Clamp Block.par:1', 'part', false, true, false, 143],
  ['Arm.par:1', 'part', false, true, false, 96],
  ['Clamp Shaft.par:1', 'part', false, true, false, 143],
  ['TOGGLE LINK.par:1', 'part', false, true, false, 143],
  ['TOGGLE LINK.par:2', 'part', false, true, false, 143],
  ['WEAR BLOCK.par:1', 'part', false, true, false, 137],
  ['WEAR BLOCK.par:2', 'part', false, true, false, 137],
  ['Side Plate LH.par:1', 'partStar', false, false, true, 155],
  ['Post bottom.par:1', 'partStar', false, true, false, 143],
  ['Post top.par:1', 'part', false, true, false, 125],
];

const Lock = () => (
  <svg width="14" height="14" viewBox="0 0 14 14" className="shrink-0">
    <path d="M2 7V3.500C2 0.500 7 0.500 7 3.500V6" fill="none" stroke="#6a5226" />
    <rect x="5" y="6" width="8" height="7" fill="#f5d28a" stroke="#a56a1a" />
  </svg>
);

const NodeIcon = ({ kind }) => {
  if (kind === 'coord') return <S n="coord" />;
  if (kind === 'planeRef')
    return (
      <svg width="16" height="14" viewBox="0 0 16 14" className="shrink-0">
        <path d="M2 2H13V10H7V12H2Z" fill="none" stroke="#6d88aa" />
      </svg>
    );
  const star = kind.endsWith('Star');
  return (
    <svg width="15" height="15" viewBox="0 0 15 15" className="shrink-0">
      {kind.startsWith('asm') ? (
        <g stroke="#8a4d10" strokeWidth=".8" fill="#f3a230">
          <rect x="4" y="1" width="5" height="6" />
          <rect x="1" y="7" width="6" height="7" />
          <rect x="7" y="7" width="6" height="7" />
        </g>
      ) : (
        <g stroke="#7a4a10" strokeWidth=".9">
          <path d="M3 4L5 2H13V11L11 13" fill="#fbe9c0" />
          <rect x="2" y="4" width="9" height="9" fill="url(#org)" />
        </g>
      )}
      {star && <path d="M11 0L14 3L11 6L8 3Z" fill="#3f85cf" stroke="#fff" strokeWidth=".5" />}
    </svg>
  );
};

const Tree = () => (
  <div className="absolute left-0 top-0 w-[250px] [font-family:'Liberation_Mono',monospace]">
    <div className="ml-[1px] mt-[2px] w-[249px] h-[9px] border border-[#8f8f8f] bg-gradient-to-b from-[#e8e8e8] to-[#c4c4c4] flex items-center justify-center">
      <div className="w-[36px] h-[2px] border-t-2 border-dotted border-[#777]" />
    </div>
    <div className="ml-[5px] mt-[6px] w-[242px] h-[17px] bg-white border-b border-r border-[#b8b8b8] text-[12px] leading-[15px] pl-[2px] text-[#bcbcbc] [font-family:'Noto_Sans_CJK_SC',sans-serif]">
      用以查找部件的类型
    </div>
    <div className="ml-[5px] mt-[4px] h-[16px] w-[203px] flex items-center bg-[#f1f1f1] border border-[#cfcfcf] text-[10px] text-[#111] whitespace-nowrap">
      <NodeIcon kind="asm" />
      <span className="ml-[2px]"><Lock /></span>
      <span className="ml-[5px]">Mechanical Clamp - Demo.asm</span>
    </div>
    {TREE.map(([label, kind, expand, checked, gray, width]) => (
      <div key={label} className="h-[16px] flex items-center">
        <div className="w-[11px] ml-[12px] shrink-0">
          {expand && (
            <div className="w-[9px] h-[9px] border border-[#8a8a8a] bg-[#f4f4f4] flex items-center justify-center text-[9px] leading-none text-[#222]">+</div>
          )}
        </div>
        <div className="w-[13px] h-[13px] ml-[4px] shrink-0 border border-[#7d7d7d] bg-[#f4f4f4] flex items-center justify-center">
          {checked && (
            <svg width="11" height="11" viewBox="0 0 11 11">
              <path d="M2 5.500L4.500 8.500L9 2" fill="none" stroke="#1c2a40" strokeWidth="1.800" />
            </svg>
          )}
        </div>
        <div
          className={`ml-[2px] h-[15px] flex items-center bg-[#f1f1f1] border border-[#cfcfcf] text-[10px] whitespace-nowrap shrink-0 pl-[1px] ${gray ? 'text-[#8e8e8e]' : 'text-[#111]'}`}
          style={{ width }}
        >
          <NodeIcon kind={kind} />
          {kind === 'coord' || kind === 'planeRef' ? (
            <span className="ml-[2px] text-[12px] [font-family:'Noto_Sans_CJK_SC',sans-serif]">{label}</span>
          ) : (
            <>
              <span className="ml-[3px]"><Lock /></span>
              <span className="ml-[5px]">{label}</span>
            </>
          )}
        </div>
      </div>
    ))}
  </div>
);

const BR = '#6f5c2a';

const Cad = () => (
  <svg width="1362" height="835" viewBox="366 190 1362 835" className="absolute left-0 top-0">
    {/* left end plate and housing */}
    <polygon points="522,233 563,233 563,436 510,436 510,296 522,296" fill="#c4a552" stroke={BR} strokeWidth=".7" />
    <rect x="563" y="233" width="254" height="199" fill="#c7a955" stroke={BR} strokeWidth=".8" />
    <rect x="563" y="248" width="254" height="40" fill="url(#barrelU)" />
    <rect x="563" y="377" width="254" height="40" fill="url(#barrelL)" />
    <path d="M563 288H817M563 377H817M563 417H817M563 248H817" stroke={BR} strokeWidth=".7" />
    <path d="M563 248V417M568 248V417M572 248V417M576 248V417M806 248V417M810 248V417M814 248V417" stroke={BR} strokeWidth=".5" />
    <rect x="630" y="317" width="5" height="30" rx="2" fill="#d8c25c" stroke={BR} strokeWidth=".6" />
    <rect x="673" y="317" width="133" height="30" fill="url(#rod)" />
    <rect x="635" y="249" width="39" height="167" fill="url(#dark)" stroke="#111" strokeWidth="1" />
    <path d="M635 288H674M635 377H674" stroke="#111" />
    {/* plate */}
    <path
      d="M878 255H1179C1205 266 1230 280 1240 292Q1245 298 1245 308V415C1243 440 1235 465 1222 471Q1215 475 1205 475H1086Q1074 475 1074 462V422Q1074 407 1060 407H878Z"
      fill="#c8a953"
      stroke={BR}
      strokeWidth="1"
    />
    <path d="M921 257V299H878M921 407V365H878" fill="none" stroke={BR} strokeWidth=".8" />
    <path d="M1030 356H940C930 356 924 346 924 332C924 318 930 308 940 308H1030M1090 308H1245M1090 356H1245" fill="none" stroke={BR} strokeWidth=".8" />
    <circle cx="897" cy="280" r="9" fill="#fff" stroke="#5d5a45" strokeWidth=".6" />
    <circle cx="897" cy="384" r="9" fill="#fff" stroke="#5d5a45" strokeWidth=".6" />
    <circle cx="1183" cy="280" r="9" fill="#fff" stroke="#5d5a45" strokeWidth=".6" />
    <circle cx="1208" cy="452" r="9" fill="#fff" stroke="#5d5a45" strokeWidth=".6" />
    {/* flange */}
    <rect x="817" y="229" width="61" height="207" rx="3" fill="#c4a552" stroke={BR} strokeWidth="1" />
    <rect x="817" y="229" width="61" height="11" rx="2" fill="url(#flangeT)" />
    <rect x="817" y="424" width="61" height="12" rx="2" fill="url(#flangeB)" />
    <path d="M860 229V436M817 240H878M817 424H878" stroke={BR} strokeWidth=".6" />
    {/* rod, rod end and toggle */}
    <rect x="878" y="318" width="99" height="29" fill="url(#rod)" stroke={BR} strokeWidth=".5" />
    <rect x="977" y="307" width="58" height="50" fill="url(#red)" stroke="#7a3a40" strokeWidth=".7" />
    <path d="M1103 350L1096 403A36 36 0 0 0 1129 439C1146 439 1160 432 1165 421L1184 423V404L1166 390L1163 335C1160 315 1145 304 1134 304C1120 304 1110 315 1103 350Z" fill="#fff" stroke="#6b6b60" strokeWidth="1.200" />
    <circle cx="1132" cy="403" r="36" fill="#fff" stroke="#6b6b60" strokeWidth=".8" />
    <circle cx="1132" cy="403" r="23" fill="#fff" stroke="#6b6b60" strokeWidth=".8" />
    <path d="M1092 315L1112 313C1118 309 1125 307 1134 307A25 25 0 1 1 1120 353L1110 349H1092Z" fill="#dccfa2" stroke="#6f6a4a" strokeWidth=".8" />
    <circle cx="1134" cy="332" r="12" fill="#c4a552" stroke="#6f5c2a" strokeWidth=".8" />
    <polygon points="1037,308 1086,308 1091,313 1091,352 1086,356 1037,356 1033,352 1033,313" fill="#fdf722" stroke="#6b6a10" strokeWidth="1" />
    <circle cx="1062" cy="332" r="11" fill="#c4a552" stroke="#7a5e10" strokeWidth="2.400" />
    <rect x="1093" y="438" width="20" height="22" rx="2" fill="#f7f01e" stroke="#6b6a10" />
    <circle cx="1103" cy="449" r="5" fill="#d5cc30" stroke="#6b6a10" strokeWidth=".7" />
    {/* blue arm and dark pad */}
    <polygon points="1245,302 1676,314 1676,371 1245,359" fill="#4a88c6" stroke="#3a6a9a" strokeWidth=".5" />
    <polygon points="1541,367 1674,371 1674,428 1541,424" fill="#4d4d52" stroke="#222" strokeWidth=".8" />
    {/* lower cylinders */}
    <rect x="901" y="817" width="194" height="146" fill="url(#steel)" stroke="#3f3f48" strokeWidth="1" />
    <rect x="1146" y="817" width="31" height="146" fill="url(#steel)" stroke="#3f3f48" strokeWidth="1" />
    {/* watermark */}
    <path
      d="M1182 776H1235V930C1235 950 1250 962 1270 962C1292 962 1305 948 1305 927C1305 905 1285 892 1256 892V839C1320 839 1357 880 1357 928C1357 980 1320 1014 1270 1014C1220 1014 1182 975 1182 925Z"
      fill="#9dd8dc"
    />
    <text x="1398" y="1004" fontSize="182" fontWeight="400" fill="#a3a2a6" stroke="#a3a2a6" strokeWidth="3" strokeLinejoin="round" fontFamily="'Noto Sans CJK SC', sans-serif">
      博华
    </text>
    {/* viewport corner marks */}
    <path d="M1712 953L1719 959L1712 965Z" fill="none" stroke="#666" />
    <rect x="1726" y="935" width="2" height="55" fill="#4a88c6" />
    <path d="M1710 1003L1716 996L1722 1003H1720V1011H1712V1003Z" fill="#fff" stroke="#555" />
  </svg>
);

const Defs = () => (
  <svg width="0" height="0" className="absolute">
    <defs>
      <linearGradient id="org" x1="0" y1="0" x2="1" y2="1">
        <stop offset="0" stopColor="#fcc058" />
        <stop offset="1" stopColor="#df7a10" />
      </linearGradient>
      <linearGradient id="blu" x1="0" y1="0" x2="1" y2="1">
        <stop offset="0" stopColor="#d4e8fb" />
        <stop offset="1" stopColor="#3f85cf" />
      </linearGradient>
      <linearGradient id="ylw" x1="0" y1="0" x2="0" y2="1">
        <stop offset="0" stopColor="#fbe08a" />
        <stop offset="1" stopColor="#e89a25" />
      </linearGradient>
      <linearGradient id="barrelU" x1="0" y1="0" x2="0" y2="1">
        <stop offset="0" stopColor="#86702e" />
        <stop offset=".5" stopColor="#b3974a" />
        <stop offset="1" stopColor="#cdae58" />
      </linearGradient>
      <linearGradient id="barrelL" x1="0" y1="0" x2="0" y2="1">
        <stop offset="0" stopColor="#ae9344" />
        <stop offset=".4" stopColor="#d9bd66" />
        <stop offset="1" stopColor="#77652a" />
      </linearGradient>
      <linearGradient id="rod" x1="0" y1="0" x2="0" y2="1">
        <stop offset="0" stopColor="#c9c915" />
        <stop offset=".3" stopColor="#ffff22" />
        <stop offset=".65" stopColor="#f0f018" />
        <stop offset="1" stopColor="#8b8b12" />
      </linearGradient>
      <linearGradient id="red" x1="0" y1="0" x2="0" y2="1">
        <stop offset="0" stopColor="#a24c58" />
        <stop offset=".5" stopColor="#e0646f" />
        <stop offset="1" stopColor="#91424f" />
      </linearGradient>
      <linearGradient id="dark" x1="0" y1="0" x2="0" y2="1">
        <stop offset="0" stopColor="#48484c" />
        <stop offset=".5" stopColor="#5c5c62" />
        <stop offset="1" stopColor="#3f3f44" />
      </linearGradient>
      <linearGradient id="flangeT" x1="0" y1="0" x2="0" y2="1">
        <stop offset="0" stopColor="#a58a3e" />
        <stop offset="1" stopColor="#c4a552" />
      </linearGradient>
      <linearGradient id="flangeB" x1="0" y1="0" x2="0" y2="1">
        <stop offset="0" stopColor="#c4a552" />
        <stop offset="1" stopColor="#80692c" />
      </linearGradient>
      <linearGradient id="steel" x1="0" y1="0" x2="0" y2="1">
        <stop offset="0" stopColor="#a8acb4" />
        <stop offset=".22" stopColor="#c2c6ce" />
        <stop offset=".36" stopColor="#e6eefa" />
        <stop offset=".55" stopColor="#d6e0f0" />
        <stop offset=".72" stopColor="#c4c8dc" />
        <stop offset=".88" stopColor="#9b9eae" />
        <stop offset="1" stopColor="#8a8c9c" />
      </linearGradient>
    </defs>
  </svg>
);

const Workspace = () => (
  <div className="flex-1 min-w-0 flex flex-col ml-[8px]">
    <div className="h-[25px] pl-[2px] pt-[1px] bg-[#6c6c6c]">
      <div className="w-[216px] h-[23px] flex items-center pl-[6px] pr-[3px] bg-gradient-to-b from-[#e4e4e4] to-[#bdbdbd] rounded-t-[3px] text-[13px] text-[#111] whitespace-nowrap">
        <svg width="16" height="14" viewBox="0 0 16 14" className="shrink-0">
          <path d="M1 6L7 2L10 5L5 9Z" fill="#e8a33a" />
          <path d="M2 9L7 5L15 10L9 13Z" fill="#2f7fd0" />
        </svg>
        <span className="ml-[2px] flex-1 [font-family:'Noto_Sans',sans-serif]">Mechanical Clamp - Demo.a...</span>
        <svg width="10" height="10" viewBox="0 0 10 10">
          <path d="M1 1L9 9M9 1L1 9" stroke="#111" strokeWidth="1.500" />
        </svg>
      </div>
    </div>
    <div className="h-[1px] bg-[#3a3a3a]" />
    <div className="h-[835px] relative overflow-hidden bg-[#fbfbfb] border-t-0">
      <Cad />
      <Tree />
      <div className="absolute left-[4px] bottom-[3px]">
        <div className="w-[21px] h-[4px] bg-[#e4a868]" />
        <div className="w-[116px] h-[13px] border border-[#9a9a9a] border-b-0 pl-[14px] text-[12px] leading-[13px] text-[#111] bg-[#f6f6f6] whitespace-nowrap">
          未选择顶层零件。
        </div>
      </div>
    </div>
    <div className="h-[3px] bg-[#8a8a8a]" />
    <div className="h-[4px] bg-[#565656]" />
    <div className="h-[3px] bg-[#6f6f6f]" />
  </div>
);

const HintBar = () => (
  <div className="h-[22px] flex shrink-0 bg-[#6c6c6c]">
    <div className="w-[70px] flex items-center pl-[5px] gap-[4px] text-[12px] text-[#f0f0f0]">
      <svg width="20" height="10" viewBox="0 0 20 10" className="shrink-0">
        <rect x=".5" y=".5" width="19" height="9" fill="#d4e2f2" stroke="#3f6ea8" />
        <path d="M3 3v4M7 3v4M12 3v4M16 3v4" stroke="#3f6ea8" />
      </svg>
      <span className="pb-[2px]">提示条</span>
    </div>
    <div className="flex-1 bg-white pl-[2px] flex text-[13px] leading-[23px] text-[#111] whitespace-nowrap [font-family:'Liberation_Sans','Noto_Sans_CJK_SC',sans-serif]">
      <div className="flex-1">选择部件以进行编辑，或单击“插入部件”命令、“原位创建零件”命令、“零件库”选项卡，或从 Windows 资源管理器拖出部件。</div>
      <div className="w-[21px] bg-[#ececec]" />
    </div>
  </div>
);

const STATUS_ICONS = ['arrowRight', 'fitView', 'zoomIn', 'zoomArea', 'pan', 'orbit', 'nav', 'screen', 'layers', 'selCursor'];

const StatusBar = () => (
  <div className="h-[21px] flex items-center bg-gradient-to-b from-[#2c2c2c] to-[#5a5a5a] shrink-0">
    <div className="w-[2px] h-[18px] bg-[#d8d8d8] ml-[945px] shrink-0" />
    <div className="w-[2px] h-[18px] bg-[#d8d8d8] ml-[265px] shrink-0" />
    <div className="w-[143px] h-[19px] ml-[22px] mt-[2px] bg-white pl-[3px] text-[11px] leading-[19px] text-[#aaa] shrink-0 border-l-2 border-l-[#888]">
      查找命令
    </div>
    <div className="flex gap-[6.400px] ml-[1px] pl-[2px]">
      {STATUS_ICONS.map((n) => (
        <S key={n} n={n} />
      ))}
    </div>
    <div className="w-[1px] h-[18px] bg-white ml-[5px] shrink-0" />
    <div className="w-[14px] h-[14px] ml-[2px] rounded-full bg-[#bcd0e6] border border-[#6d88aa] flex items-center justify-center shrink-0">
      <div className="w-[8px] h-[2px] bg-[#222]" />
    </div>
    <div className="flex-1 h-[1px] bg-[#ddd] ml-[3px] relative">
      <div className="absolute left-[39px] -top-[8px] w-[10px] h-[16px] bg-[#c8d8ea] border border-[#6d88aa] rounded-b-[4px]" />
    </div>
  </div>
);

export default function App() {
  return (
    <div className="w-[1728px] h-[1080px] overflow-hidden flex flex-col bg-[#6c6c6c] [font-family:'Noto_Sans_CJK_SC',sans-serif]">
      <Defs />
      <TitleBar />
      <TabBar />
      <Ribbon />
      <div className="h-[5px] shrink-0 bg-gradient-to-b from-[#8a8a8a] to-[#6a6a6a]" />
      <FloatBar />
      <div className="flex-1 flex min-h-0 bg-[#5a5a5a]">
        <LeftPanel />
        <div className="flex-1 min-w-0 flex flex-col ml-[4px]">
          <div className="h-[871px] flex shrink-0">
            <MidPanel />
            <Workspace />
          </div>
          <HintBar />
        </div>
      </div>
      <StatusBar />
      <div className="h-[2px] shrink-0 bg-[#dcdcdc]" />
    </div>
  );
}
